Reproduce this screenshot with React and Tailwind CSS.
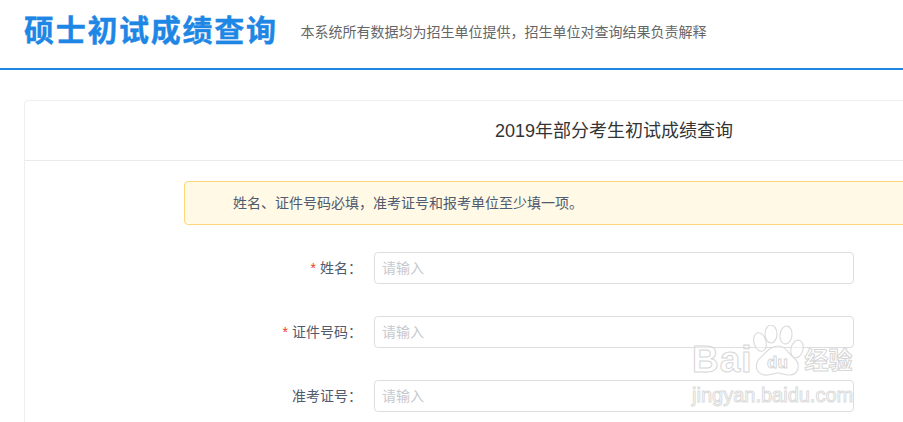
const fontStack = { fontFamily: '"Liberation Sans", "Noto Sans CJK SC", sans-serif' }

const fields = [
  { label: '姓名', required: true },
  { label: '证件号码', required: true },
  { label: '准考证号', required: false }
]

function FormRow({ label, required }) {
  return (
    <div className="flex items-center h-8 mb-8">
      <label className="w-[349px] shrink-0 pr-3 text-right text-[14px] leading-8 text-[#515a6e]">
        {required && <span className="text-[#ed4014] mr-1">*</span>}
        {label}：
      </label>
      <input
        placeholder="请输入"
        className="w-[480px] h-8 px-[7px] rounded border border-[#dcdee2] bg-white text-[14px] placeholder:text-[#c5c8ce] outline-none"
      />
    </div>
  )
}

// 百度经验水印
function Watermark() {
  return (
    <div className="absolute left-[692px] top-[325px] w-[170px] flex flex-col pointer-events-none">
      <div className="flex items-end h-[52px]">
        <span className="text-[37px] leading-[34px] font-bold tracking-[1px] text-white/40 [-webkit-text-stroke:1px_#d6d6d6]">Bai</span>
        <svg className="shrink-0" width="52" height="52" viewBox="0 0 52 52" fill="#fff" fillOpacity="0.45" stroke="#dadada" strokeWidth="1.1">
          <ellipse cx="7" cy="17" rx="6" ry="9.5" transform="rotate(-15 7 17)" />
          <ellipse cx="18" cy="9" rx="6" ry="9" />
          <ellipse cx="33" cy="10" rx="6" ry="9" transform="rotate(8 33 10)" />
          <ellipse cx="44" cy="24" rx="6" ry="9" transform="rotate(15 44 24)" />
          <path d="M26 21c6 0 9 7 15 12 7 6 5 17-5 17-5 0-7-2-11-2s-8 3-13 2c-9-1-11-10-6-16 6-5 10-13 20-13z" />
          <text x="14" y="43" fontSize="17" fontWeight="700" fill="#fff" stroke="#d6d6d6" strokeWidth="0.9">du</text>
        </svg>
        <span className="text-[24px] leading-[32px] font-bold whitespace-nowrap text-white/40 [-webkit-text-stroke:1px_#d6d6d6]">经验</span>
      </div>
      <span className="mt-[6px] text-[20px] leading-6 whitespace-nowrap text-white/40 [-webkit-text-stroke:1px_#dcdcdc]">jingyan.baidu.com</span>
    </div>
  )
}

export default function App() {
  return (
    <div className="relative w-[903px] h-[422px] overflow-hidden bg-white" style={fontStack}>
      {/* Header */}
      <div className="flex items-center h-[70px] pl-6 pb-[6px] border-b-2 border-[#1e86e4]">
        <h1 className="text-[30px] leading-10 font-bold text-[#1e86e4] tracking-[1.7px] whitespace-nowrap [-webkit-text-stroke:0.4px_#1e86e4]">硕士初试成绩查询</h1>
        <span className="ml-[23px] mt-[3px] text-[14px] text-[#666] whitespace-nowrap">本系统所有数据均为招生单位提供，招生单位对查询结果负责解释</span>
      </div>

      {/* Card */}
      <div className="w-[1180px] ml-6 mt-[30px] border border-[#eeeeee] rounded-sm">
        <div className="h-[60px] pt-[2px] border-b border-[#e8eaec] flex items-center justify-center text-[18px] text-[#333]">
          2019年部分考生初试成绩查询
        </div>
        <div className="pt-5">
          <div className="w-[960px] ml-[159px] h-11 flex items-center pl-12 rounded border border-[#ffd77a] bg-[#fff9e6] text-[14px] text-[#515a6e] mb-[27px]">
            姓名、证件号码必填，准考证号和报考单位至少填一项。
          </div>
          {fields.map(f => (
            <FormRow key={f.label} label={f.label} required={f.required} />
          ))}
        </div>
      </div>

      <Watermark />
    </div>
  )
}
